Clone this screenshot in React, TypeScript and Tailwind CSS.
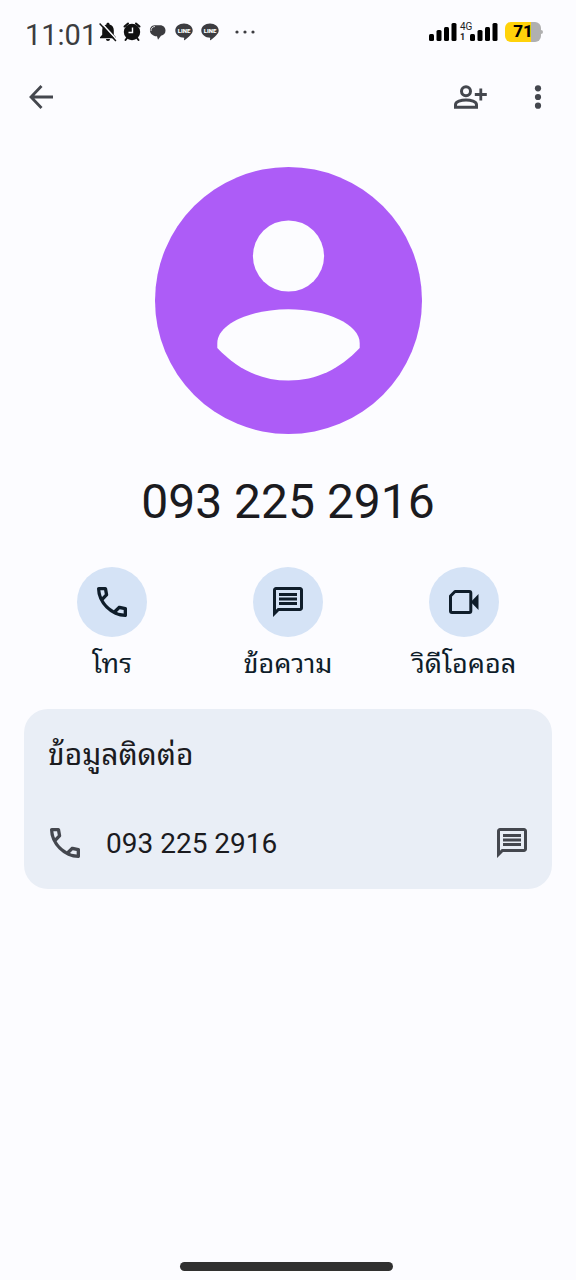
import type { ReactNode } from 'react';

const PHONE_NUMBER = '093 225 2916';

const thaiFont = "font-['Noto_Sans_Thai_Looped','Loma','Waree','Noto_Sans',sans-serif]";
const digitFont = "font-['Roboto',sans-serif]";

function PhoneIcon() {
  return (
    <svg viewBox="120 -840 720 720" className="w-[30px] h-[30px]" fill="currentColor" aria-hidden="true">
      <path d="M798-120q-125 0-247-54.5T329-329Q229-429 174.5-551T120-798q0-18 12-30t30-12h162q14 0 25 9.5t13 22.5l26 140q2 16-1 27t-11 19l-97 98q20 37 47.5 71.5T387-386q31 31 65 57.5t72 48.5l94-94q9-9 23.5-13.5T670-390l138 28q14 4 23 14.5t9 23.5v162q0 18-12 30t-30 12ZM241-600l66-66-17-94h-89q5 41 14 81t26 79Zm358 358q39 17 79.5 27t81.5 13v-88l-94-19-67 67Z" />
    </svg>
  );
}

function MessageIcon() {
  return (
    <svg viewBox="2 2 20 20" className="w-[30px] h-[30px]" fill="currentColor" aria-hidden="true">
      <path d="M4 4h16v12H5.17L4 17.17V4m0-2c-1.1 0-1.99.9-1.99 2L2 22l4-4h14c1.1 0 2-.9 2-2V4c0-1.1-.9-2-2-2H4zm2 10h12v2H6v-2zm0-3h12v2H6V9zm0-3h12v2H6V6z" />
    </svg>
  );
}

function VideoIcon() {
  return (
    <svg viewBox="0 0 30 24" className="w-[30px] h-6" aria-hidden="true">
      <path
        d="M6 1.5h14.3q1.5 0 1.5 1.5v18q0 1.5-1.5 1.5H3q-1.5 0-1.5-1.5V6z"
        fill="none"
        stroke="currentColor"
        strokeWidth="3"
        strokeLinejoin="round"
      />
      <path d="M22.5 11.2L29.5 4v16l-7-7.2z" fill="currentColor" />
    </svg>
  );
}

function PersonAddIcon() {
  return (
    <svg viewBox="0 0 33 24" className="w-[33px] h-6" fill="none" stroke="currentColor" strokeWidth="3" aria-hidden="true">
      <circle cx="12" cy="6.2" r="4.5" />
      <path d="M1.5 22.3v-2.6c0-2.9 5.6-4.8 10.5-4.8s10.5 1.9 10.5 4.8v2.6z" />
      <path d="M26.8 3.5v12M20.8 9.5h12" strokeWidth="2.8" />
    </svg>
  );
}

function BellOffIcon() {
  return (
    <svg viewBox="0 0 18 20" className="w-[18px] h-5" aria-hidden="true">
      <path d="M9 .8c1 0 1.6.7 1.6 1.6 2.7.7 4.2 2.9 4.2 5.8v4.6l2.2 2.5v.9H1v-.9l2.2-2.5V8.2c0-2.9 1.5-5.1 4.2-5.8C7.4 1.5 8 .8 9 .8zM7 17h4c0 1.2-.8 2-2 2s-2-.8-2-2z" fill="#111" />
      <path d="M2 .5l16 17.5" stroke="#fcfcff" strokeWidth="1.6" />
      <path d="M.6 1.5l16.3 17.5" stroke="#111" strokeWidth="1.5" />
    </svg>
  );
}

function AlarmIcon() {
  return (
    <svg viewBox="0 0 18 20" className="w-[18px] h-5" aria-hidden="true">
      <circle cx="9" cy="10" r="8.2" fill="#111" />
      <path d="M1.5 4.5l3.5-3M16.5 4.5l-3.5-3M4 16l-1.5 2M14 16l1.5 2" stroke="#111" strokeWidth="2" strokeLinecap="round" />
      <path d="M9.5 5.5v5h-4" stroke="#fcfcff" strokeWidth="1.4" fill="none" />
    </svg>
  );
}

function BubbleIcon() {
  return (
    <svg viewBox="0 0 17 18" className="w-[17px] h-[18px]" aria-hidden="true">
      <path d="M3 11.5C-.3 9.5.2 2.500 5.500 2.200h5.500c3.500 0 5.500 2.500 5.500 5.300 0 2.800-1.700 4.800-4.500 5.200L9 16.800 8 13.300c-2 .2-3.500-.5-5-1.800z" fill="#3c3c40" />
      <path d="M2 8C1.800 5.500 3.500 3.600 6 3.500" stroke="#fcfcff" strokeWidth=".8" fill="none" />
    </svg>
  );
}

function LineIcon() {
  return (
    <svg viewBox="0 0 18 18" className="w-[18px] h-[18px]" aria-hidden="true">
      <path d="M9 .5c4.9 0 8.7 3.1 8.7 7 0 3.300-3.700 6.200-8.200 9.700-.3.2-.6 0-.5-.4l.2-2.100C4.300 14.700.3 11.500.3 7.500c0-3.900 3.800-7 8.700-7z" fill="#3c3c40" />
      <text x="9" y="9.500" textAnchor="middle" className="font-['Roboto',sans-serif] text-[6px] font-black fill-white">
        LINE
      </text>
    </svg>
  );
}

function SignalIcon() {
  return (
    <svg viewBox="0 0 28 18" className="w-7 h-[18px]" aria-hidden="true">
      <rect x="0" y="11" width="5" height="7" rx="1.5" />
      <rect x="7.5" y="7" width="5" height="11" rx="1.5" />
      <rect x="15" y="4" width="5" height="14" rx="1.5" />
      <rect x="22.5" y="0" width="5" height="18" rx="1.5" />
    </svg>
  );
}

function StatusBar() {
  return (
    <div className="flex items-center h-16 pl-[25px] pr-[33px] font-['Roboto',sans-serif]">
      <span className="w-[72px] text-[29px] leading-8 text-[#3c3c40] pt-[6px]">11:01</span>
      <div className="flex items-center gap-2 ml-[2px]">
        <div className="flex gap-[6px]">
          <BellOffIcon />
          <AlarmIcon />
        </div>
        <BubbleIcon />
        <div className="flex gap-2 ml-px">
          <LineIcon />
          <LineIcon />
        </div>
        <svg viewBox="0 0 20 4" className="w-5 h-1 ml-2" fill="#3c3c40" aria-hidden="true">
          <circle cx="2" cy="2" r="1.6" />
          <circle cx="10" cy="2" r="1.6" />
          <circle cx="18" cy="2" r="1.6" />
        </svg>
      </div>
      <div className="flex items-center ml-auto">
        <SignalIcon />
        <div className="flex flex-col w-3 ml-[3px] text-[10px] leading-[10px] text-[#222]">
          <span>4G</span>
          <span className="text-[9px] font-bold">1</span>
        </div>
        <div className="-ml-[2px]">
          <SignalIcon />
        </div>
        <div className="flex items-center ml-[7px]">
          <div className="flex items-center justify-center w-9 h-5 rounded-md bg-linear-to-r from-[#ffd20a] from-72% to-[#b0b0b0] to-72% text-[17px] font-extrabold text-black">
            71
          </div>
          <div className="w-[2px] h-1 rounded-r-sm bg-[#b0b0b0]" />
        </div>
      </div>
    </div>
  );
}

function TopBar() {
  return (
    <header className="flex items-center h-[66px] pl-[29px] pr-[33px] text-[#44474e]">
      <button type="button" aria-label="ย้อนกลับ">
        <svg viewBox="0 0 24 24" className="w-6 h-6" fill="none" stroke="currentColor" strokeWidth="2.8" aria-hidden="true">
          <path d="M12.5 1L2 12l10.5 11M2 12h22" />
        </svg>
      </button>
      <button type="button" aria-label="เพิ่มรายชื่อติดต่อ" className="ml-auto">
        <PersonAddIcon />
      </button>
      <button type="button" aria-label="ตัวเลือกเพิ่มเติม" className="ml-[46px]">
        <svg viewBox="0 0 10 24" className="w-[10px] h-6" fill="currentColor" aria-hidden="true">
          <circle cx="5" cy="3.3" r="3.1" />
          <circle cx="5" cy="12" r="3.1" />
          <circle cx="5" cy="20.7" r="3.1" />
        </svg>
      </button>
    </header>
  );
}

function Avatar() {
  return (
    <svg viewBox="0 0 267 267" className="w-[267px] h-[267px]" aria-hidden="true">
      <circle cx="133.5" cy="133.5" r="133.5" fill="#ad5cf7" />
      <circle cx="133.5" cy="89" r="35.6" fill="#fcfcff" />
      <path
        d="M62.3 181v-5c0-18.5 32.7-33.8 71.2-33.8s71.2 15.3 71.2 33.8v5c-20 21-43 32.5-71.2 32.5S82.3 202 62.3 181z"
        fill="#fcfcff"
      />
    </svg>
  );
}

function ActionButton({ label, children }: { label: string; children: ReactNode }) {
  return (
    <button type="button" className="flex flex-col items-center flex-1 text-[#0f1d2a]">
      <span className="flex items-center justify-center w-[70px] h-[70px] rounded-full bg-[#d5e3f6]">
        {children}
      </span>
      <span className={`mt-2 text-[27px] leading-8 whitespace-nowrap ${thaiFont}`}>{label}</span>
    </button>
  );
}

export default function App() {
  return (
    <div className="flex flex-col min-h-screen bg-[#fcfcff] text-[#1b1b1f]">
      <StatusBar />
      <TopBar />

      <main className="flex flex-col items-center px-6 pt-[37px]">
        <Avatar />
        <h1 className={`mt-10 text-5xl leading-[56px] ${digitFont}`}>{PHONE_NUMBER}</h1>

        <div className="flex w-full mt-[37px]">
          <ActionButton label="โทร">
            <PhoneIcon />
          </ActionButton>
          <ActionButton label="ข้อความ">
            <MessageIcon />
          </ActionButton>
          <ActionButton label="วิดีโอคอล">
            <VideoIcon />
          </ActionButton>
        </div>

        {/* Contact info */}
        <section className="w-full mt-8 px-6 pt-[25px] pb-6 rounded-3xl bg-[#e9eef6]">
          <h2 className={`text-[30px] leading-9 ${thaiFont}`}>ข้อมูลติดต่อ</h2>
          <div className="flex items-center h-11 mt-[51px] text-[#44474e]">
            <a href="tel:0932252916" className="flex items-center gap-[26px] pl-[2px]">
              <PhoneIcon />
              <span className={`pt-[2px] text-[28px] leading-9 text-[#1b1b1f] ${digitFont}`}>{PHONE_NUMBER}</span>
            </a>
            <button type="button" aria-label="ส่งข้อความ" className="ml-auto mr-px">
              <MessageIcon />
            </button>
          </div>
        </section>
      </main>

      <div className="flex justify-center mt-auto pb-[9px] pr-1">
        <div className="w-[213px] h-[9px] rounded-full bg-[#303030]" />
      </div>
    </div>
  );
}
